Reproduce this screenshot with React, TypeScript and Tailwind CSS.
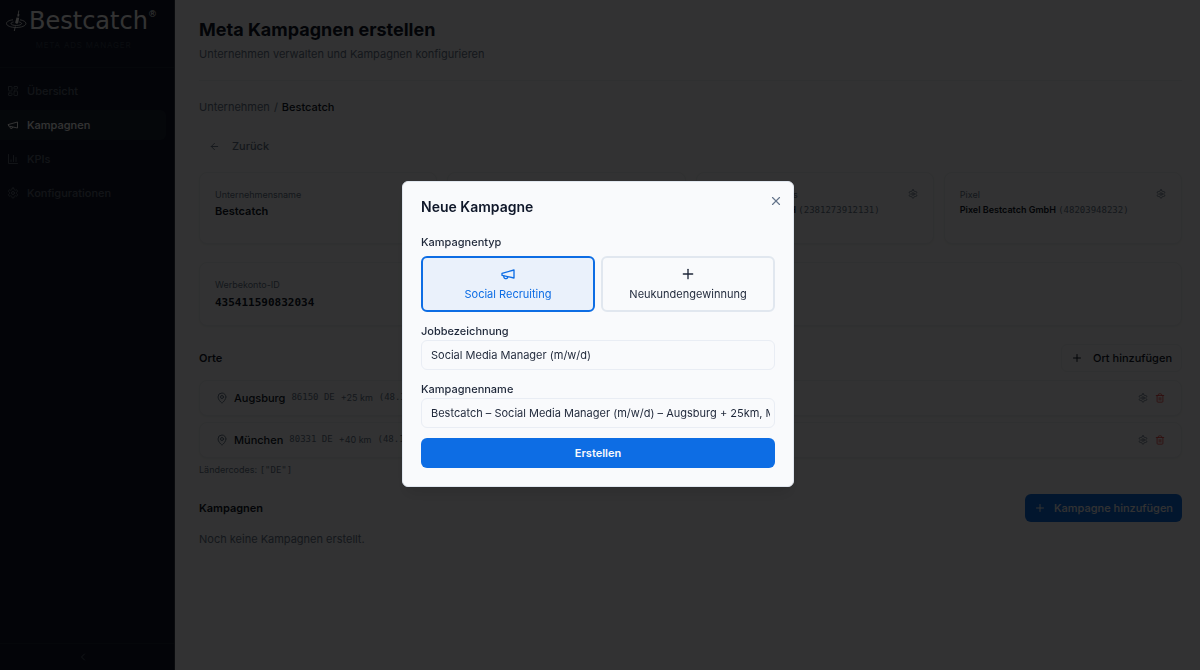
import { useState } from 'react'
import type { ReactNode } from 'react'
import { ArrowLeft, ChevronLeft, LayoutDashboard, MapPin, Plus, Trash2, X } from 'lucide-react'

type IconProps = { className?: string }

function Icon({ className, children }: IconProps & { children: ReactNode }) {
  return (
    <svg
      viewBox="0 0 24 24"
      fill="none"
      stroke="currentColor"
      strokeWidth={2}
      strokeLinecap="round"
      strokeLinejoin="round"
      className={className}
      aria-hidden="true"
    >
      {children}
    </svg>
  )
}

function Megaphone({ className }: IconProps) {
  return (
    <Icon className={className}>
      <path d="m3 11 18-5v12L3 14v-3z" />
      <path d="M11.6 16.8a3 3 0 1 1-5.8-1.6" />
    </Icon>
  )
}

function BarChart({ className }: IconProps) {
  return (
    <Icon className={className}>
      <path d="M3 3v18h18" />
      <path d="M18 17V9" />
      <path d="M13 17V5" />
      <path d="M8 17v-3" />
    </Icon>
  )
}

function Gear({ className }: IconProps) {
  return (
    <Icon className={className}>
      <path d="M12.22 2h-.44a2 2 0 0 0-2 2v.18a2 2 0 0 1-1 1.73l-.43.25a2 2 0 0 1-2 0l-.15-.08a2 2 0 0 0-2.73.73l-.22.38a2 2 0 0 0 .73 2.73l.15.1a2 2 0 0 1 1 1.72v.51a2 2 0 0 1-1 1.74l-.15.09a2 2 0 0 0-.73 2.73l.22.38a2 2 0 0 0 2.73.73l.15-.08a2 2 0 0 1 2 0l.43.25a2 2 0 0 1 1 1.73V20a2 2 0 0 0 2 2h.44a2 2 0 0 0 2-2v-.18a2 2 0 0 1 1-1.73l.43-.25a2 2 0 0 1 2 0l.15.08a2 2 0 0 0 2.73-.73l.22-.39a2 2 0 0 0-.73-2.73l-.15-.08a2 2 0 0 1-1-1.74v-.5a2 2 0 0 1 1-1.74l.15-.09a2 2 0 0 0 .73-2.73l-.22-.38a2 2 0 0 0-2.73-.73l-.15.08a2 2 0 0 1-2 0l-.43-.25a2 2 0 0 1-1-1.73V4a2 2 0 0 0-2-2z" />
      <circle cx="12" cy="12" r="3" />
    </Icon>
  )
}

// Fishing float on rippling water
function LogoMark() {
  return (
    <svg viewBox="0 0 22 24" className="h-6 w-[22px]" fill="none" stroke="currentColor" aria-hidden="true">
      <path d="M8 10.800C4 11.300 1.500 12.700 1.500 14.500c0 2.300 4.300 4 9.700 4s9.700-1.700 9.700-4c0-1.800-2.400-3.100-5.900-3.700" strokeWidth="0.8" />
      <path d="M8.500 13c-1.500.3-2.500.8-2.500 1.500 0 1.100 2.400 2 5.300 2s5.300-.9 5.300-2c0-.7-1-1.200-2.500-1.500" strokeWidth="0.8" />
      <path d="M13.800 1.500 13.300 5M10.300 17.500 9.300 22" strokeWidth="0.9" />
      <path d="M12.600 5h1.800l-.3 2.600h-1.800zM11.500 8.500l2.700.3-1 5.200c-.5 1.200-3 .9-3-.4z" fill="currentColor" stroke="none" />
    </svg>
  )
}

const navItems = [
  { label: 'Übersicht', icon: LayoutDashboard, active: false },
  { label: 'Kampagnen', icon: Megaphone, active: true },
  { label: 'KPIs', icon: BarChart, active: false },
  { label: 'Konfigurationen', icon: Gear, active: false },
]

const accounts = [
  { label: 'Unternehmensname', value: 'Bestcatch', id: '' },
  { label: 'Facebook-Seite', value: 'Bestcatch', id: '' },
  { label: 'Instagram-Accounts', value: 'IG Bestcatch GmbH', id: '2381273912131' },
  { label: 'Pixel', value: 'Pixel Bestcatch GmbH', id: '48203948232' },
]

const places = [
  { name: 'Augsburg', zip: '86150', radius: '+25 km', coords: '(48.3705, 10.8978)' },
  { name: 'München', zip: '80331', radius: '+40 km', coords: '(48.1351, 11.5820)' },
]

function Sidebar() {
  return (
    <aside className="sticky top-0 flex h-screen w-[175px] shrink-0 flex-col border-r border-[#333a48] bg-[#0f1729]">
      <div className="flex h-[68px] flex-col border-b border-[#1d2636] pt-2 pl-[5px]">
        <div className="flex items-center gap-0.5 text-white">
          <LogoMark />
          <span className="flex font-['DejaVu_Sans'] text-2xl leading-[26px]">
            Bestcatch
            <span className="text-[9px] leading-3">®</span>
          </span>
        </div>
        <p className="pt-1.5 pr-3 text-center text-[8px] leading-[10px] tracking-widest text-[#343d4f]">META ADS MANAGER</p>
      </div>
      <nav className="flex flex-1 flex-col gap-1 pt-2 pr-2">
        {navItems.map(({ label, icon: NavIcon, active }) => (
          <a
            key={label}
            href="#"
            aria-current={active ? 'page' : undefined}
            className={
              active
                ? 'flex h-[30px] items-center gap-2 rounded-r-md bg-[#1d2636] pl-[7px] text-[11px] font-medium text-white'
                : 'flex h-[30px] items-center gap-2 rounded-r-md pl-[7px] text-[11px] font-medium text-[#5c6575]'
            }
          >
            <NavIcon className="size-3" />
            {label}
          </a>
        ))}
      </nav>
      <button aria-label="Menü einklappen" className="flex h-[27px] items-center justify-center border-t border-[#1d2636] pr-2 text-[#5c6575]">
        <ChevronLeft className="size-3" />
      </button>
    </aside>
  )
}

function AccountCard({ label, value, id }: { label: string; value: string; id: string }) {
  return (
    <div className="flex h-[72px] items-start justify-between rounded-lg border border-[#e9edf4] bg-[#fafbfd] px-[15px] pt-4 shadow-xs">
      <div>
        <p className="text-[9px] leading-3 text-[#65758b]">{label}</p>
        {id ? (
          <p className="mt-[3px] text-[9px] leading-3 font-semibold whitespace-nowrap text-[#0f1729]">
            {value} <span className="font-['DejaVu_Sans_Mono'] font-normal text-[#65758b]">({id})</span>
          </p>
        ) : (
          <p className="mt-0.5 text-[11px] leading-4 font-semibold text-[#0f1729]">{value}</p>
        )}
      </div>
      {id && (
        <button aria-label={`${label} bearbeiten`} className="text-[#65758b]">
          <Gear className="size-2.5" />
        </button>
      )}
    </div>
  )
}

function CampaignDialog({ onClose }: { onClose: () => void }) {
  const [type, setType] = useState('recruiting')
  const [job, setJob] = useState('Social Media Manager (m/w/d)')
  const [name, setName] = useState('Bestcatch – Social Media Manager (m/w/d) – Augsburg + 25km, München + 40km')

  const typeClass = (selected: boolean) =>
    selected
      ? 'flex h-14 flex-col items-center justify-center gap-1 rounded-md border-2 border-[#0d6de4] bg-[#eaf1fb] text-[11px] leading-4 text-[#0d6de4]'
      : 'flex h-14 flex-col items-center justify-center gap-1 rounded-md border-2 border-[#e1e7ef] text-[11px] leading-4 text-[#1e2739]'

  return (
    <div className="fixed inset-0 flex items-center justify-center bg-black/80 pr-1 pb-0.5">
      <div
        role="dialog"
        aria-modal="true"
        aria-labelledby="dialog-title"
        className="relative w-[392px] rounded-md border border-[#e1e7ef] bg-[#f9fafc] p-[18px] text-[#1e2739] shadow-lg"
      >
        <button aria-label="Schließen" onClick={onClose} className="absolute top-2.5 right-2 p-0.5 text-[#65758b]">
          <X className="size-3.5" />
        </button>
        <h2 id="dialog-title" className="text-sm leading-[14px] font-semibold text-[#0f1729]">
          Neue Kampagne
        </h2>

        <p id="type-label" className="mt-[22px] text-[11px] leading-3 font-medium">
          Kampagnentyp
        </p>
        <div role="group" aria-labelledby="type-label" className="mt-2 grid grid-cols-2 gap-1.5">
          <button
            aria-pressed={type === 'recruiting'}
            onClick={() => setType('recruiting')}
            className={typeClass(type === 'recruiting')}
          >
            <Megaphone className="size-4" />
            Social Recruiting
          </button>
          <button
            aria-pressed={type === 'customers'}
            onClick={() => setType('customers')}
            className={typeClass(type === 'customers')}
          >
            <Plus className="size-4" />
            Neukundengewinnung
          </button>
        </div>

        <label htmlFor="job" className="mt-3 block text-[11px] leading-[14px] font-medium">
          Jobbezeichnung
        </label>
        <input
          id="job"
          value={job}
          onChange={(e) => setJob(e.target.value)}
          className="mt-0.5 block h-[30px] w-full rounded-md border border-[#e9edf4] pr-1 pl-[9px] text-[11px]"
        />

        <label htmlFor="name" className="mt-3 block text-[11px] leading-[14px] font-medium">
          Kampagnenname
        </label>
        <input
          id="name"
          value={name}
          onChange={(e) => setName(e.target.value)}
          className="mt-0.5 block h-[30px] w-full rounded-md border border-[#e9edf4] pr-1 pl-[9px] text-[11px]"
        />

        <button className="mt-2.5 h-[30px] w-full rounded-md bg-[#0d6de4] text-[11px] font-semibold text-[#f9fafc]">
          Erstellen
        </button>
      </div>
    </div>
  )
}

export default function App() {
  const [open, setOpen] = useState(true)

  return (
    <div className="flex min-h-screen bg-[#f9fafc] font-['Inter',sans-serif] text-[#0f1729]">
      <Sidebar />

      <main className="min-w-0 flex-1 pr-[18px] pb-6 pl-6">
        <header className="border-b border-[#e9edf4] pt-[18px] pb-[18px]">
          <h1 className="text-lg leading-6 font-bold">Meta Kampagnen erstellen</h1>
          <p className="mt-1 text-[11px] leading-4 text-[#65758b]">Unternehmen verwalten und Kampagnen konfigurieren</p>
        </header>

        <nav aria-label="Breadcrumb" className="mt-[18px] flex gap-1 text-[11px] leading-4 text-[#65758b]">
          <a href="#">Unternehmen</a>
          <span>/</span>
          <span className="font-medium text-[#0f1729]">Bestcatch</span>
        </nav>

        <button className="mt-[17px] flex h-7 items-center gap-3 px-2.5 text-[11px] font-medium text-[#65758b]">
          <ArrowLeft className="size-[11px]" />
          Zurück
        </button>

        <section className="mt-3 grid grid-cols-4 gap-2.5">
          {accounts.map((account) => (
            <AccountCard key={account.label} {...account} />
          ))}
        </section>

        <section className="mt-[18px] h-16 rounded-lg border border-[#e9edf4] bg-[#fafbfd] px-[15px] pt-4 shadow-xs">
          <p className="text-[9px] leading-3 text-[#65758b]">Werbekonto-ID</p>
          <p className="mt-1 font-['DejaVu_Sans_Mono'] text-[11px] leading-4 font-bold">435411590832034</p>
        </section>

        <section className="mt-[18px]">
          <div className="flex items-center justify-between">
            <h2 className="text-[11px] font-semibold">Orte</h2>
            <button className="flex h-7 items-center gap-2.5 rounded-md border border-[#e9edf4] px-[9px] text-[11px] font-medium">
              <Plus className="size-3" />
              Ort hinzufügen
            </button>
          </div>
          <ul className="mt-2 flex flex-col gap-1.5">
            {places.map((place) => (
              <li
                key={place.name}
                className="flex h-9 items-center justify-between rounded-lg border border-[#e9edf4] bg-[#fafbfd] px-4 shadow-xs"
              >
                <div className="flex items-center gap-1.5 text-[9px] text-[#65758b]">
                  <MapPin className="size-3" />
                  <span className="text-[11px] font-medium text-[#0f1729]">{place.name}</span>
                  <span className="font-['DejaVu_Sans_Mono']">{place.zip} DE</span>
                  <span>{place.radius}</span>
                  <span className="font-['DejaVu_Sans_Mono']">{place.coords}</span>
                </div>
                <div className="flex items-center gap-[7px]">
                  <button aria-label={`${place.name} bearbeiten`} className="text-[#65758b]">
                    <Gear className="size-2.5" />
                  </button>
                  <button aria-label={`${place.name} löschen`} className="text-[#ef4343]">
                    <Trash2 className="size-2.5" />
                  </button>
                </div>
              </li>
            ))}
          </ul>
          <p className="mt-1.5 text-[9px] leading-3 text-[#65758b]">
            Ländercodes: <span className="font-['DejaVu_Sans_Mono']">["DE"]</span>
          </p>
        </section>

        <section className="mt-[18px]">
          <div className="flex items-center justify-between">
            <h2 className="text-[11px] font-semibold">Kampagnen</h2>
            <button
              onClick={() => setOpen(true)}
              className="flex h-7 items-center gap-2 rounded-md bg-[#0d6de4] px-[9px] text-[11px] font-medium text-[#f9fafc]"
            >
              <Plus className="size-3" />
              Kampagne hinzufügen
            </button>
          </div>
          <p className="mt-[9px] text-[11px] leading-4 text-[#65758b]">Noch keine Kampagnen erstellt.</p>
        </section>
      </main>

      {open && <CampaignDialog onClose={() => setOpen(false)} />}
    </div>
  )
}
